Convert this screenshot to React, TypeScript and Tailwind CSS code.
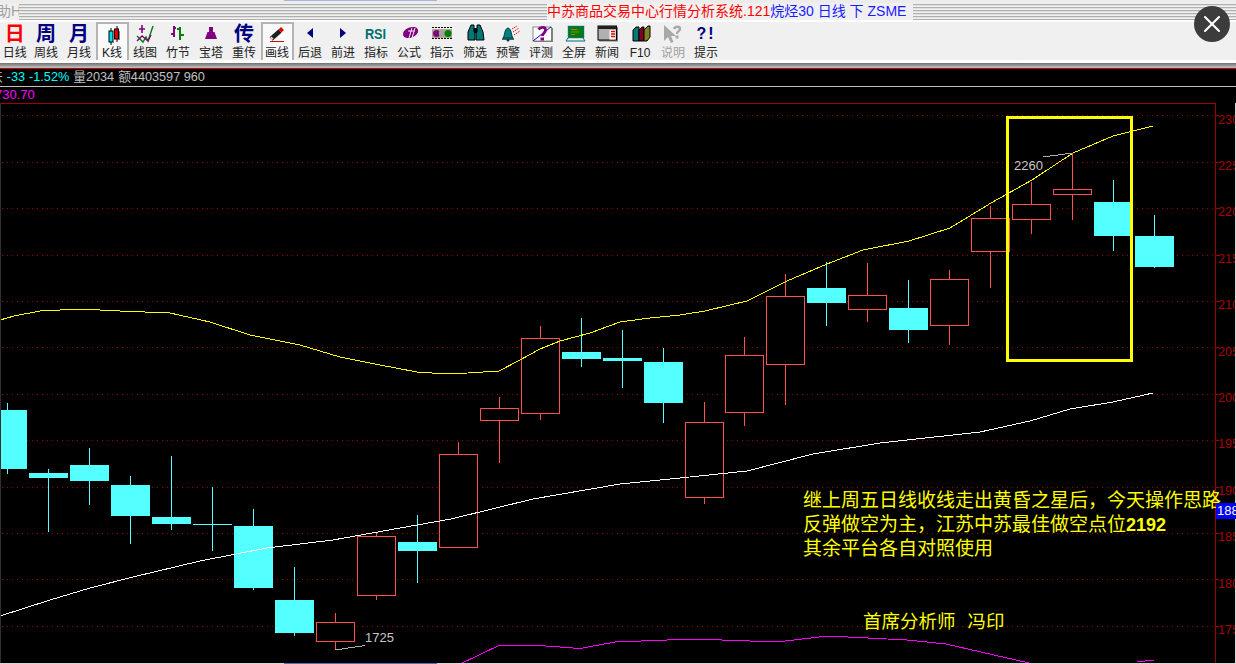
import type { ReactNode } from 'react';
import { X } from 'lucide-react';

// top, bottom = body edges, high, low = wick ends (page pixels)
type Candle = { up: boolean; top: number; bottom: number; high: number; low: number };

const candles: Candle[] = [
  { up: false, top: 410, bottom: 469, high: 403, low: 474 },
  { up: false, top: 473, bottom: 478, high: 469, low: 532 },
  { up: false, top: 465, bottom: 481, high: 448, low: 505 },
  { up: false, top: 485, bottom: 516, high: 476, low: 544 },
  { up: false, top: 517, bottom: 524, high: 456, low: 530 },
  { up: false, top: 524, bottom: 525, high: 487, low: 551 },
  { up: false, top: 526, bottom: 588, high: 509, low: 590 },
  { up: false, top: 600, bottom: 633, high: 567, low: 636 },
  { up: true, top: 622, bottom: 642, high: 613, low: 650 },
  { up: true, top: 536, bottom: 596, high: 533, low: 600 },
  { up: false, top: 542, bottom: 551, high: 515, low: 583 },
  { up: true, top: 454, bottom: 548, high: 442, low: 548 },
  { up: true, top: 408, bottom: 421, high: 397, low: 463 },
  { up: true, top: 338, bottom: 414, high: 326, low: 420 },
  { up: false, top: 352, bottom: 359, high: 318, low: 367 },
  { up: false, top: 358, bottom: 361, high: 330, low: 388 },
  { up: false, top: 362, bottom: 403, high: 348, low: 423 },
  { up: true, top: 422, bottom: 498, high: 402, low: 504 },
  { up: true, top: 355, bottom: 413, high: 337, low: 426 },
  { up: true, top: 296, bottom: 365, high: 274, low: 405 },
  { up: false, top: 288, bottom: 303, high: 262, low: 326 },
  { up: true, top: 295, bottom: 310, high: 263, low: 322 },
  { up: false, top: 308, bottom: 330, high: 280, low: 343 },
  { up: true, top: 279, bottom: 326, high: 270, low: 345 },
  { up: true, top: 218, bottom: 252, high: 206, low: 288 },
  { up: true, top: 204, bottom: 220, high: 182, low: 234 },
  { up: true, top: 189, bottom: 195, high: 153, low: 220 },
  { up: false, top: 202, bottom: 236, high: 180, low: 251 },
  { up: false, top: 236, bottom: 267, high: 215, low: 268 },
];

const yellowLine =
  '0,320 14,316 40,311 80,309 120,311 170,313 210,322 250,335 300,345 340,357 380,365 417,372 440,373.5 468,373 499,371 520,360 540,349 560,341 590,333 620,322 650,318 680,315 705,311 747,301 787,281 827,264 863,250 909,241 950,228 991,203 1032,180 1073,153 1113,136 1153,126';
const whiteLine =
  '0,616 50,600 90,588 133,577 200,561 267,548 333,540 400,528 451,519 533,499 620,484 680,478 747,471 813,454 880,443 980,432 1030,421 1070,409 1113,402 1153,393';
const magentaLine = '460,664 499,645.5 546,646 580,648.5 615,642 694,639 777,642 828,636 907,640 946,644 1029,663';

const gridLines = [115.5, 162, 208, 255, 301, 347.5, 394, 440, 487, 533, 579.5, 626];
const priceLabels = ['230', '225', '220', '215', '210', '205', '200', '195', '190', '185', '180', '175'];

type Tool = { label: string; icon: ReactNode; pressed?: boolean; disabled?: boolean };

function IconBox({ children }: { children: ReactNode }) {
  return (
    <svg width="32" height="22" viewBox="0 0 32 22" className="block">
      {children}
    </svg>
  );
}

function Glyph({ color, children }: { color: string; children: string }) {
  return <span className={`text-[20px] leading-[22px] font-bold ${color}`}>{children}</span>;
}

const tools: Tool[] = [
  { label: '日线', icon: <Glyph color="text-[#ff0000]">日</Glyph> },
  { label: '周线', icon: <Glyph color="text-[#000080]">周</Glyph> },
  { label: '月线', icon: <Glyph color="text-[#000080]">月</Glyph> },
  {
    label: 'K线',
    pressed: true,
    icon: (
      <IconBox>
        <path d="M15 4v17M21 2v16" stroke="#000" strokeWidth="1" />
        <rect x="13" y="7" width="4" height="11" fill="#00e0e8" stroke="#000" />
        <rect x="18.5" y="5" width="4" height="10" fill="#e00000" stroke="#000" />
        <path d="M23.5 7v9M17.5 11v8" stroke="#808080" />
      </IconBox>
    ),
  },
  {
    label: '线图',
    icon: (
      <IconBox>
        <path d="M8 13l6 6 3-5 2 4 5-15" fill="none" stroke="#008000" strokeWidth="1.4" />
        <path d="M8 18l5-5 6 5 3-6" fill="none" stroke="#800080" strokeWidth="1.4" />
        <path d="M13 2v8M10 6h6" stroke="#800080" strokeWidth="1.6" />
      </IconBox>
    ),
  },
  {
    label: '竹节',
    icon: (
      <IconBox>
        <path d="M12 3v11M9 11h3M12 5h2" stroke="#800080" strokeWidth="2" />
        <path d="M18 4v13M15 6h3M18 12h4" stroke="#008000" strokeWidth="2" />
      </IconBox>
    ),
  },
  {
    label: '宝塔',
    icon: (
      <IconBox>
        <path d="M14 4h4v5h1.5l2.5 7H10l2.5-7H14z" fill="#800080" />
      </IconBox>
    ),
  },
  { label: '重传', icon: <Glyph color="text-[#000080]">传</Glyph> },
  {
    label: '画线',
    pressed: true,
    icon: (
      <IconBox>
        <path d="M10 15l9-8" stroke="#202020" strokeWidth="4.5" />
        <path d="M9.5 15.5l2-2" stroke="#d0d0d0" strokeWidth="3" />
        <path d="M19 7l2.5-2.5" stroke="#e00000" strokeWidth="4" />
        <path d="M9 17.5h14" stroke="#e00000" strokeWidth="1" />
      </IconBox>
    ),
  },
  {
    label: '后退',
    icon: (
      <IconBox>
        <polygon points="13,10 19,5 19,15" fill="#000080" />
      </IconBox>
    ),
  },
  {
    label: '前进',
    icon: (
      <IconBox>
        <polygon points="13,5 19,10 13,15" fill="#000080" />
      </IconBox>
    ),
  },
  {
    label: '指标',
    icon: <span className="text-[15px] leading-[22px] font-bold text-[#007070] scale-x-[0.85]">RSI</span>,
  },
  {
    label: '公式',
    icon: (
      <IconBox>
        <ellipse cx="17.5" cy="9.5" rx="8" ry="5" fill="#800080" transform="rotate(-22 17.5 9.5)" />
        <path d="M16 15l3-10M19 15l3-10M15 8h7" stroke="#f0f0f0" strokeWidth="1" fill="none" />
      </IconBox>
    ),
  },
  {
    label: '指示',
    icon: (
      <IconBox>
        <path d="M6 4.5h20M6 15.5h20" stroke="#000" strokeWidth="1" strokeDasharray="2 1" />
        <rect x="6" y="6" width="20" height="9" fill="#b0a890" />
        <circle cx="10.5" cy="10.5" r="3.5" fill="#800080" />
        <circle cx="16" cy="10.5" r="3.2" fill="#a0a0a0" />
        <circle cx="22" cy="10.5" r="3.5" fill="#008000" />
      </IconBox>
    ),
  },
  {
    label: '筛选',
    icon: (
      <IconBox>
        <path d="M12 2h3v7h1v8h-7v-8z" fill="#007878" stroke="#000" strokeWidth="1" />
        <path d="M21 2h-3v7h-1v8h8l-1-8z" fill="#007878" stroke="#000" strokeWidth="1" />
        <path d="M15 5h3v5h-3z" fill="#000" />
      </IconBox>
    ),
  },
  {
    label: '预警',
    icon: (
      <IconBox>
        <path d="M11 15c2-2 1-9 5-10 4 1 3 8 5 10z" fill="#008080" stroke="#003c3c" strokeWidth="1" />
        <path d="M10 16h12" stroke="#003c3c" strokeWidth="1.5" />
        <circle cx="16" cy="17" r="1.5" fill="#003c3c" />
        <path d="M20 6l5-3M21 9l6-4M22 12l6-4" stroke="#e00000" strokeWidth="1" strokeDasharray="1.5 1" />
      </IconBox>
    ),
  },
  {
    label: '评测',
    icon: (
      <IconBox>
        <rect x="9" y="5" width="19" height="14" fill="#808080" />
        <rect x="8" y="4" width="18.5" height="14" fill="#fff" stroke="#707070" strokeWidth="0.8" />
        <path d="M8 18L26 4" stroke="#0000d0" strokeWidth="1" />
        <path d="M13.5 6.5c2-3 7-3 7 .5 0 3-3 3-3 6" fill="none" stroke="#800080" strokeWidth="2.8" />
        <rect x="15.5" y="14.5" width="3.5" height="3" fill="#800080" />
      </IconBox>
    ),
  },
  {
    label: '全屏',
    icon: (
      <IconBox>
        <rect x="10.5" y="3.5" width="15" height="11" fill="#008000" stroke="#007070" strokeWidth="1.4" />
        <path d="M13 6.5h6M13 9h8M13 11.5h4" stroke="#a07820" strokeWidth="1" />
        <path d="M10 15l-2 3h19l-2-3" fill="none" stroke="#007070" strokeWidth="1" />
      </IconBox>
    ),
  },
  {
    label: '新闻',
    icon: (
      <IconBox>
        <rect x="8" y="4" width="19" height="14.5" fill="#808080" />
        <rect x="7" y="3" width="18.5" height="14" fill="#b0b0b0" stroke="#000" strokeWidth="1" />
        <rect x="7" y="3" width="18.5" height="3" fill="#202020" />
        <rect x="18.5" y="7" width="6" height="9.5" fill="#fff" />
        <path d="M20 8.5h4M20 11h4M20 13.5h4" stroke="#e00000" strokeWidth="1.4" />
      </IconBox>
    ),
  },
  {
    label: 'F10',
    icon: (
      <IconBox>
        <path d="M9 7l3-3h3v14H9z" fill="#007878" stroke="#000" strokeWidth="1" />
        <path d="M15 7l3-3h2v14h-5z" fill="#800020" stroke="#000" strokeWidth="1" />
        <path d="M20 7l4-4h2v11l-3 4h-3z" fill="#808020" stroke="#000" strokeWidth="1" />
      </IconBox>
    ),
  },
  {
    label: '说明',
    disabled: true,
    icon: (
      <IconBox>
        <polygon points="7,2 7,18 11,14 14,20 16.5,19 14,13 19,13" fill="#a8a8a8" />
        <path d="M17 6c1-3 6-3 6 0 0 2-3 2-3 5" fill="none" stroke="#a8a8a8" strokeWidth="2.4" />
        <rect x="18.5" y="12.5" width="3" height="3" fill="#a8a8a8" />
      </IconBox>
    ),
  },
  {
    label: '提示',
    icon: <span className="text-[16px] leading-[22px] font-bold text-[#000080] tracking-[2px]">?!</span>,
  },
];

function ToolButton({ tool, first }: { tool: Tool; first: boolean }) {
  return (
    <div
      className={`flex flex-col items-center h-[38px] shrink-0 ${first ? 'w-[29.5px]' : 'w-[33px]'} ${
        tool.pressed ? 'border-x-2 border-t-2 border-[#b4b4b4] bg-[#fafafa]' : ''
      }`}
    >
      <div className={`flex items-center justify-center w-[32px] ${tool.pressed ? 'h-[22px]' : 'h-[24px]'}`}>
        {tool.icon}
      </div>
      <span
        className={`text-[12px] leading-[14px] whitespace-nowrap ${
          tool.disabled ? 'text-[#a0a0a0]' : 'text-[#202020]'
        }`}
      >
        {tool.label}
      </span>
    </div>
  );
}

const stripes =
  'bg-[repeating-linear-gradient(to_bottom,#f0f0f0_0,#f0f0f0_1px,#b0b0b0_1px,#b0b0b0_2px,#e0e0e0_2px,#e0e0e0_3px)]';

function CandleMark({ candle, cx }: { candle: Candle; cx: number }) {
  const color = candle.up ? '#ff5050' : '#54ffff';
  return (
    <g>
      <line x1={cx} x2={cx} y1={candle.high} y2={candle.low} stroke={color} />
      {candle.up ? (
        <rect
          x={cx - 19}
          y={candle.top + 0.5}
          width={38}
          height={candle.bottom - candle.top - 1}
          fill="#000"
          stroke={color}
        />
      ) : (
        <rect x={cx - 19.5} y={candle.top} width={39} height={candle.bottom - candle.top} fill={color} />
      )}
    </g>
  );
}

function Chart() {
  return (
    <div className="relative h-[560px] overflow-hidden bg-black">
      <svg
        width="1236"
        height="560"
        viewBox="0 103 1236 560"
        shapeRendering="crispEdges"
        className="block font-['Liberation_Sans',sans-serif]"
      >
        <line x1="0" x2="1215" y1="103.5" y2="103.5" stroke="#a00000" />
        <line x1="1215.5" x2="1215.5" y1="103" y2="663" stroke="#a00000" />
        {gridLines.map((y, i) => (
          <g key={y}>
            <line x1="2" x2="1215" y1={y} y2={y} stroke="#a00000" strokeDasharray="1 4" />
            <line x1="1215" x2="1219" y1={y} y2={y} stroke="#a00000" />
            <text x="1218" y={y + 8} fontSize="12.5" fill="#a80000">
              {priceLabels[i]}
            </text>
          </g>
        ))}
        {candles.map((candle, i) => (
          <CandleMark key={i} candle={candle} cx={i <= 17 ? 7.5 + 41 * i : 6.5 + 41 * i} />
        ))}
        <polyline points={yellowLine} fill="none" stroke="#ffff00" />
        <polyline points={whiteLine} fill="none" stroke="#ffffff" />
        <polyline points={magentaLine} fill="none" stroke="#ff00ff" />
        <polyline points="1137,662 1154,660" fill="none" stroke="#ff00ff" />
        <rect x="1007.5" y="117.5" width="124" height="243" fill="none" stroke="#ffff00" strokeWidth="3" />
        <polyline points="1043,157 1073,153" fill="none" stroke="#b0b0b0" />
        <polyline points="335,650 365,645.5" fill="none" stroke="#b0b0b0" />
        <text x="1014" y="170" fontSize="13" fill="#c8c8c8">
          2260
        </text>
        <text x="365" y="641.5" fontSize="13" fill="#c8c8c8">
          1725
        </text>
        <line x1="0.5" x2="0.5" y1="103" y2="663" stroke="#303030" />
        <line x1="1235.5" x2="1235.5" y1="103" y2="663" stroke="#d8d8d8" />
      </svg>

      <div className="absolute left-[803px] top-[386px] text-[19px] leading-[24px] text-[#ffff00] whitespace-nowrap">
        <p>继上周五日线收线走出黄昏之星后，今天操作思路</p>
        <p>
          反弹做空为主，江苏中苏最佳做空点位<span className="font-bold text-[18px]">2192</span>
        </p>
        <p>其余平台各自对照使用</p>
      </div>
      <p className="absolute left-[863px] top-[507px] flex gap-[12px] text-[18.5px] leading-[24px] text-[#ffff00] whitespace-nowrap">
        <span>首席分析师</span>
        <span>冯印</span>
      </p>
      <div className="absolute left-[1216px] top-[400px] w-[20px] h-[16px] overflow-hidden bg-[#0000ff] text-[13px] leading-[16px] text-[#ffffe0] pl-[1px]">
        188
      </div>
    </div>
  );
}

export default function App() {
  return (
    <div className="relative w-[1236px] h-[664px] overflow-hidden flex flex-col bg-[#f0f0f0] font-['Liberation_Sans','Noto_Sans_CJK_SC',sans-serif]">
      <div className="flex h-[3px] shrink-0 bg-[#ececec]">
        <div className="w-[284px]" />
        <div className="w-[153px] h-[1px] bg-[#a8b4d8]" />
      </div>

      <div className="flex h-[17px] shrink-0 items-center">
        <span className="w-[19px] overflow-hidden text-[14px] leading-[17px] text-[#a0a0a0] whitespace-nowrap -indent-[3px]">
          助H
        </span>
        <div className={`w-[528px] h-full ${stripes}`} />
        <div className="w-[366px] h-full text-[14px] leading-[17px] whitespace-nowrap">
          <span className="text-[#ff0000]">中苏商品交易中心行情分析系统.121</span>
          <span className="text-[#1a1aff]">烷烃30 日线 下 ZSME</span>
        </div>
        <div className={`flex-1 h-full ${stripes}`} />
      </div>

      <div className="h-[2px] shrink-0 bg-white" />

      <div className="flex h-[38px] shrink-0">
        {tools.map((tool, i) => (
          <ToolButton key={tool.label} tool={tool} first={i === 0} />
        ))}
      </div>

      <div className="h-[3px] shrink-0 bg-white" />
      <div className="h-[5px] shrink-0 bg-[linear-gradient(to_bottom,#707070,#c4c4c4)]" />
      <div className="h-[1px] shrink-0 bg-[#c80000]" />

      <div className="flex items-center gap-[4px] h-[17px] shrink-0 overflow-hidden bg-black text-[12.7px] leading-[17px] text-[#c0c0c0] whitespace-nowrap">
        <span className="-ml-[10px]">跌</span>
        <span className="text-[#00ffff]">-33</span>
        <span className="text-[#00ffff]">-1.52%</span>
        <span>量2034</span>
        <span>额4403597 960</span>
      </div>
      <div className="h-[1px] shrink-0 bg-[#c0c0c0]" />
      <div className="h-[16px] shrink-0 overflow-hidden bg-black text-[13px] leading-[16px] text-[#ff00ff] -indent-[5px]">
        730.70
      </div>

      <Chart />

      <div className="flex h-[1px] shrink-0 bg-[#d8d8d8]">
        <div className="w-[284px]" />
        <div className="w-[153px] bg-[#5a6ea8]" />
      </div>

      <button
        aria-label="关闭"
        className="absolute left-[1194px] top-[6px] flex h-[36px] w-[36px] items-center justify-center rounded-full bg-[#3c3c3c] text-white"
      >
        <X className="h-[28px] w-[28px]" strokeWidth={1.8} />
      </button>
    </div>
  );
}
